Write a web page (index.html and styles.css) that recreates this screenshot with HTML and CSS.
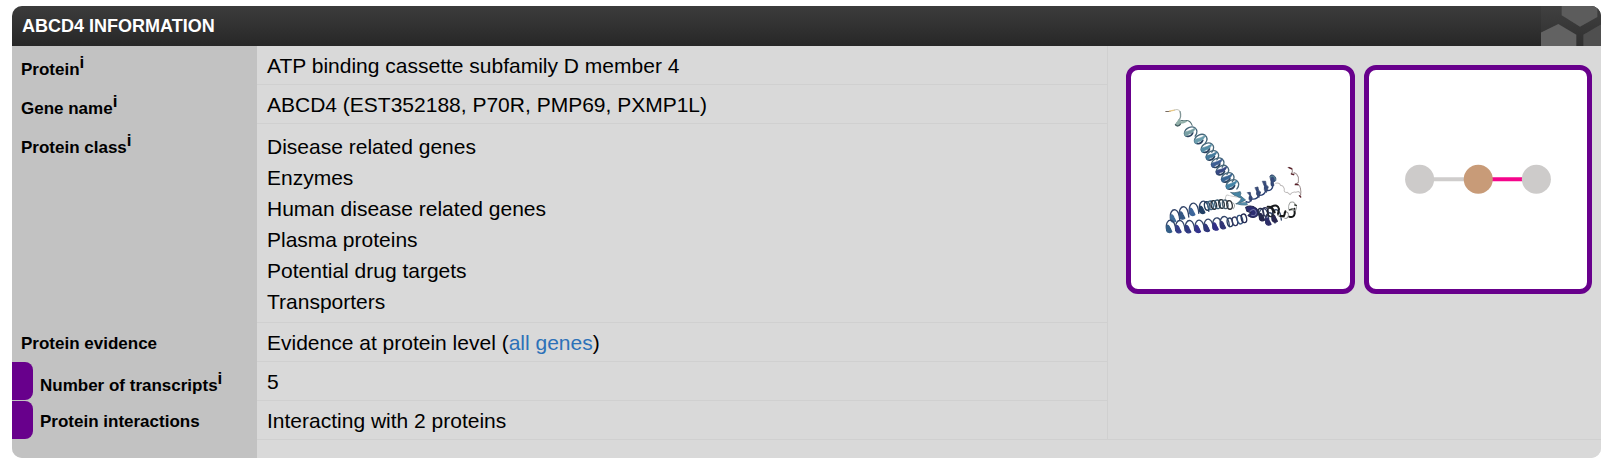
FILE: index.html
```html
<!DOCTYPE html>
<html lang="en">
  <head>
    <meta charset="utf-8">
    <title>ABCD4 information</title>
    <link rel="stylesheet" href="styles.css">
  </head>
  <body>
    <div class="panel">
      <div class="panel-header">
        <h1>ABCD4 INFORMATION</h1>
        <svg class="hexagons" viewBox="0 0 180 120" aria-hidden="true">
          <defs>
            <linearGradient id="hexBack" x1="0" y1="0" x2="0" y2="1">
              <stop offset="0" stop-color="#404040"/>
              <stop offset="1" stop-color="#303030"/>
            </linearGradient>
            <filter id="soft">
              <feGaussianBlur stdDeviation="2"/>
            </filter>
          </defs>
          <rect width="180" height="120" fill="url(#hexBack)"/>
          <g filter="url(#soft)">
            <path d="M62 -9V28L117 62L169 33V-9Z" fill="#5c5c5c"/>
            <path d="M-9 88V84L52 54L106 86V129H-9Z" fill="#626262"/>
            <path d="M127 129V86L189 50V129Z" fill="#505050"/>
          </g>
        </svg>
      </div>

      <table class="info">
        <tbody>
          <tr>
            <th scope="row">Protein<sup>i</sup></th>
            <td>ATP binding cassette subfamily D member 4</td>
            <td class="media" rowspan="6">
              <div class="cards">
                <a class="card" href="#structure" aria-label="Protein structure">
                  <svg viewBox="-57 -60 654 654" fill="none" stroke-linecap="round" stroke-linejoin="round">
                    <defs>
                      <!-- one turn of the diagonal helix -->
                      <g id="turn">
                        <path d="M-16 2C-14 -12 6 -20 15 -13C24 -6 22 4 16 12" stroke="#48687b" stroke-width="4"/>
                        <path d="M-15 4C-15 17 4 15 9 2" stroke="#2c4360" stroke-width="5"/>
                        <path d="M-17 3Q-15 -2 -6 -3C4 -5 12 -10 16 -13C14 -1 5 4 -3 6C-7 8 -8 13 -13 12Z" fill="currentColor" stroke="currentColor" stroke-width="2"/>
                      </g>
                      <!-- one turn of the horizontal helix -->
                      <g id="arch">
                        <path d="M-9 14C-14 -8 -4 -19 5 -16C14 -13 17 2 18 14" stroke="#34466a" stroke-width="4"/>
                        <path d="M-9 2C-7 -5 -2 0 1 8L6 18C1 22 -7 21 -9 15Z" fill="currentColor" stroke="currentColor" stroke-width="4"/>
                      </g>
                      <ellipse id="ring" rx="8" ry="13" stroke="currentColor" stroke-width="4" transform="rotate(-12)"/>
                    </defs>

                    <path d="M47 64L60 64" stroke="#776a61" stroke-width="3"/>
                    <path d="M58 63L73 60" stroke="#eac985" stroke-width="4"/>
                    <path d="M73 60Q86 55 90 65" stroke="#c5c6bd" stroke-width="3"/>
                    <path d="M90 65Q95 82 85 91" stroke="#819596" stroke-width="4"/>
                    <path d="M76 104Q87 88 101 92Q120 87 126 106" stroke="#526f74" stroke-width="3"/>
                    <path d="M75 104Q89 77 94 94Q108 88 111 95Q99 102 92 101Q85 111 75 104Z" fill="#91afa9"/>
                    <path d="M76 104Q84 112 91 102" stroke="#455f62" stroke-width="4"/>
                    <use href="#turn" x="119" y="126" color="#789fa4"/>
                    <use href="#turn" x="149" y="148" color="#6b9eae"/>
                    <use href="#turn" x="169" y="174" color="#558da5"/>
                    <use href="#turn" x="184" y="197" color="#467b9c"/>
                    <use href="#turn" x="200" y="219" color="#3e5f93"/>
                    <use href="#turn" x="214" y="241" color="#374983"/>
                    <use href="#turn" x="230" y="263" color="#376592"/>
                    <use href="#turn" x="244" y="284" color="#4484a6"/>
                    <path d="M242 307Q252 309 270 304Q274 308 270 316L286 329Q275 337 258 341Q273 331 273 324Q252 318 242 307Z" fill="#4685a4" stroke="#385c70" stroke-width="2"/>
                    <path d="M257 340L289 335L292 344Q274 347 257 340Z" fill="#5a91ae" stroke="#334e62"/>
                    <path d="M226 331Q224 309 237 316L259 320" stroke="#c7c9c9" stroke-width="3"/>

                    <path d="M288 334Q301 340 302 326M302 326Q321 329 325 315M325 315Q343 316 346 300M346 300Q368 304 368 282" stroke="#293f72" stroke-width="4"/>
                    <path d="M292 307L300 306Q300 316 306 322L303 333Q292 330 298 316ZM315 292L323 290Q323 302 331 305L326 322Q315 312 319 305ZM337 273L346 273Q345 284 354 290L348 307Q339 299 342 289ZM359 257Q365 249 375 260Q381 273 369 275L371 286Q360 294 362 275Z" fill="#364b7c" stroke="#2b3c64" stroke-width="2"/>
                    <path d="M361 260Q372 253 375 269" stroke="#568091" stroke-width="4"/>
                    <path d="M376 279Q388 276 391 286Q398 284 402 296Q399 308 411 306L419 313Q427 303 436 306L445 304L452 312" stroke="#bebbbb" stroke-width="3"/>
                    <path d="M413 232L424 234Q429 243 423 251Q431 258 431 247Q440 250 444 261L444 276L434 284M434 284Q448 280 450 294Q454 306 449 319" stroke="#a09292" stroke-width="3"/>
                    <path d="M416 232L424 236M423 251L430 253M435 282L443 283M447 316L451 320" stroke="#5a2029" stroke-width="4"/>

                    <use href="#arch" x="71" y="375" color="#416d99"/>
                    <use href="#arch" x="98" y="366" color="#345783"/>
                    <use href="#arch" x="128" y="355" color="#3d669b"/>
                    <use href="#arch" x="158" y="349" color="#213f65"/>
                    <use href="#ring" x="171" y="347" color="#253d5b"/>
                    <use href="#ring" x="181" y="345" color="#3d6681"/>
                    <use href="#ring" x="191" y="344" color="#25313d"/>
                    <use href="#ring" x="202" y="342" color="#37596e"/>
                    <use href="#ring" x="214" y="341" color="#29343c"/>
                    <use href="#ring" x="225" y="342" color="#4a606f"/>
                    <use href="#ring" x="238" y="344" color="#303439"/>
                    <path d="M247 337Q258 344 249 355" stroke="#9da0a0" stroke-width="3"/>

                    <use href="#arch" x="59" y="406" color="#355f87"/>
                    <use href="#arch" x="87" y="407" color="#343d89"/>
                    <use href="#arch" x="116" y="407" color="#303982"/>
                    <use href="#arch" x="145" y="406" color="#34348d"/>
                    <use href="#arch" x="172" y="403" color="#30377b"/>
                    <use href="#arch" x="198" y="399" color="#322f87"/>
                    <use href="#arch" x="220" y="395" color="#303474"/>
                    <use href="#ring" x="239" y="396" color="#293f62"/>
                    <use href="#ring" x="254" y="393" color="#353a62"/>
                    <use href="#ring" x="269" y="388" color="#32517b"/>
                    <use href="#ring" x="281" y="384" color="#252b53"/>
                    <path d="M286 351Q302 342 318 354Q329 365 320 377Q309 387 293 376L302 367L290 363Z" fill="#2c2d72" stroke="#20244e" stroke-width="3"/>
                    <path d="M299 363Q313 350 318 367Q317 378 304 375" stroke="#7275a4" stroke-width="3"/>
                    <use href="#arch" x="337" y="371" color="#25254b"/>
                    <use href="#arch" x="356" y="384" color="#2d2d68"/>
                    <use href="#arch" x="375" y="375" color="#28264e"/>
                    <use href="#ring" x="332" y="367" color="#252d4a"/>
                    <use href="#ring" x="346" y="365" color="#34385b"/>
                    <use href="#ring" x="360" y="366" color="#23252f"/>
                    <path d="M352 349L364 350L373 366M365 348Q382 341 386 356L383 371" stroke="#17191c" stroke-width="6"/>
                    <path d="M382 375Q399 388 404 371M401 367Q416 361 414 377Q410 389 399 381" stroke="#8d8e92" stroke-width="3"/>
                    <path d="M390 377L401 377L405 363M417 379Q431 383 433 369L432 355" stroke="#17191b" stroke-width="6"/>
                    <path d="M415 356Q413 332 430 336Q443 348 436 360L420 359" stroke="#9a9d9b" stroke-width="3"/>
                    <path d="M417 359L426 356M433 344L438 345" stroke="#30372f" stroke-width="4"/>
                  </svg>
                </a>
                <a class="card" href="#interactions" aria-label="Protein interaction network">
                  <svg viewBox="0 0 218 218">
                    <path d="M51 109H109" stroke="#cfcdcc" stroke-width="4"/>
                    <path d="M109 109H167" stroke="#f5058b" stroke-width="4"/>
                    <circle cx="50.5" cy="109" r="14.5" fill="#cdcbca"/>
                    <circle cx="109" cy="109" r="14.5" fill="#c89b78"/>
                    <circle cx="167" cy="109" r="14.5" fill="#cdcbca"/>
                  </svg>
                </a>
              </div>
            </td>
          </tr>
          <tr>
            <th scope="row">Gene name<sup>i</sup></th>
            <td>ABCD4 (EST352188, P70R, PMP69, PXMP1L)</td>
          </tr>
          <tr>
            <th scope="row">Protein class<sup>i</sup></th>
            <td>
              <ul>
                <li>Disease related genes</li>
                <li>Enzymes</li>
                <li>Human disease related genes</li>
                <li>Plasma proteins</li>
                <li>Potential drug targets</li>
                <li>Transporters</li>
              </ul>
            </td>
          </tr>
          <tr>
            <th scope="row">Protein evidence</th>
            <td>Evidence at protein level (<a href="#evidence">all genes</a>)</td>
          </tr>
          <tr>
            <th scope="row" class="tabbed">
              <div class="tab-label"><span class="tab"></span><span class="tab-text">Number of transcripts<sup>i</sup></span></div>
            </th>
            <td>5</td>
          </tr>
          <tr>
            <th scope="row" class="tabbed">
              <div class="tab-label"><span class="tab"></span><span class="tab-text">Protein interactions</span></div>
            </th>
            <td>Interacting with 2 proteins</td>
          </tr>
        </tbody>
      </table>
      <div class="panel-footer"></div>
    </div>
  </body>
</html>
```

FILE: styles.css
```css
body {
  margin: 6px 11px 7px 12px;
  background-color: #fff;
  color: #000;
  font-family: "Liberation Sans", Arial, sans-serif;
  font-size: 21px;
}

.panel {
  border-radius: 10px;
  overflow: hidden;
  background-color: #d9d9d9;
}

.panel-header {
  display: flex;
  justify-content: space-between;
  align-items: center;
  height: 40px;
  padding-left: 10px;
  background: linear-gradient(#3c3c3c, #272727);
}

.panel-header h1 {
  margin: 0;
  color: #fff;
  font-size: 18px;
  line-height: 20px;
}

.hexagons {
  width: 60px;
  height: 40px;
}

.info {
  width: 100%;
  border-collapse: separate;
  border-spacing: 0;
}

th,
td {
  padding: 2px 10px 0;
  text-align: left;
  vertical-align: top;
  line-height: 36px;
}

th {
  width: 226px;
  padding: 11px 10px 0 9px;
  background-color: #c2c2c2;
  font-size: 17px;
  line-height: 20px;
  white-space: nowrap;
}

td {
  border-bottom: 1px solid #d0d0d0;
}

sup {
  font-size: 17px;
  line-height: 11px;
}

ul {
  margin: 0;
  padding: 5px 0;
  list-style: none;
  line-height: 31px;
}

a {
  color: #2c71b8;
  text-decoration: none;
}

.tabbed {
  width: 245px;
  padding: 0;
}

.tab-label {
  display: flex;
  gap: 7px;
}

.tab {
  width: 21px;
  height: 38px;
  border-radius: 0 8px 8px 0;
  background-color: #68008c;
}

.tab-text {
  padding-top: 11px;
}

.media {
  width: 466px;
  padding: 19px 9px 0 18px;
  border-left: 1px solid #d0d0d0;
}

.cards {
  display: flex;
  gap: 9px;
}

.card {
  flex: 1;
  box-sizing: border-box;
  border: 5px solid #68008c;
  border-radius: 12px;
  overflow: hidden;
  background-color: #fff;
}

.card svg {
  display: block;
  width: 100%;
}

.panel-footer {
  height: 18px;
  background: linear-gradient(to right, #c2c2c2 245px, #d9d9d9 245px);
}
```
